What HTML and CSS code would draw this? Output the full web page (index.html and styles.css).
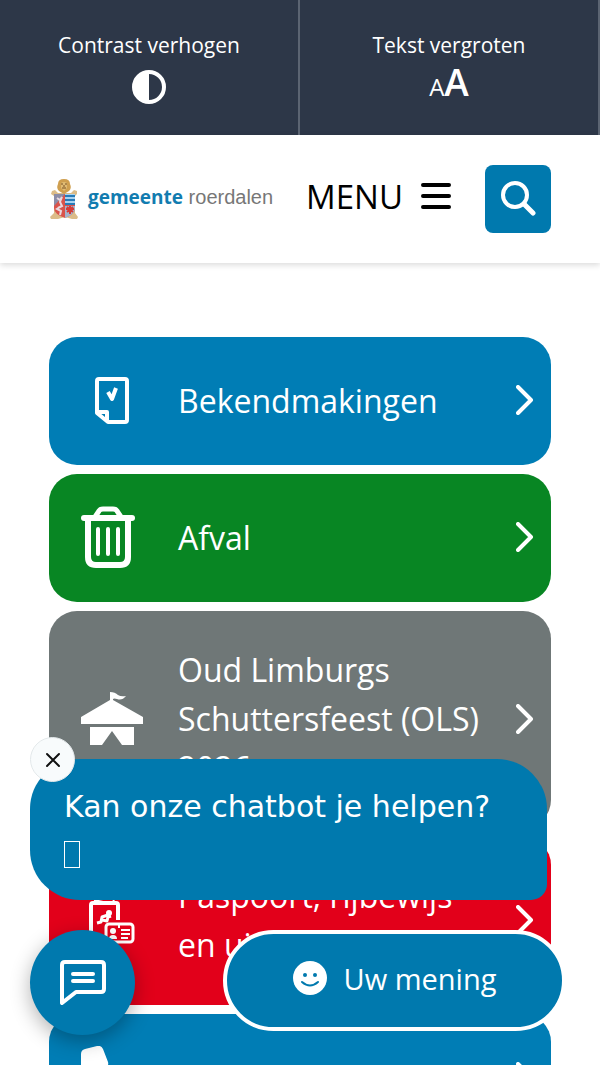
FILE: index.html
```html
<!DOCTYPE html>
<html lang="nl">
<head>
	<meta charset="UTF-8">
	<meta name="viewport" content="width=device-width, initial-scale=1">
	<title>Gemeente Roerdalen</title>
	<link rel="stylesheet" href="styles.css">
</head>
<body>
	<div class="tools">
		<button class="tool" type="button">
			<span>Contrast verhogen</span>
			<svg width="34" height="34" viewBox="0 0 34 34"><circle cx="17" cy="17" r="15" fill="none" stroke="#fff" stroke-width="4"/><path d="M17 2a15 15 0 0 0 0 30z" fill="#fff"/></svg>
		</button>
		<button class="tool" type="button">
			<span>Tekst vergroten</span>
			<span class="letters"><small>A</small><b>A</b></span>
		</button>
	</div>

	<header class="header">
		<a class="logo" href="#">
			<svg width="30" height="42" viewBox="0 0 30 42">
				<path d="M3 13l3-1 3 3h13l3-3 3 1v3l-2 2v17l3 4-1 2h-5l-7-2-7 2H2l-1-2 4-4V18l-3-2z" fill="#dcbc88"/>
				<path d="M9 6q0-5 6-5t6 5q2 4-1 7l-5 3-5-3q-3-3-1-7z" fill="#cf9f4f"/>
				<path d="M12 5q3-2 6 0v5l-3 3-3-3z" fill="#e0bb74"/>
				<path d="M12 6h2M16 6h2M13 10h4M15 7v2" stroke="#7a5223"/>
				<path d="M5 16h21v14q0 6-10 10Q5 36 5 30z" fill="#d9534b"/>
				<path d="M5 16h11L5 28z" fill="#8c8da8"/>
				<path d="M16 16h10v11H16z" fill="#a9d2ef"/>
				<path d="M16 18h10M16 22h10M16 26h10" stroke="#287bb8" stroke-width="2"/>
				<path d="M16 28h10v3q-1 6-10 9z" fill="#a5b4cc"/>
				<path d="M21 28v8M17 31h8M18 29l6 5M24 29l-6 5" stroke="#d63b37" stroke-width="2"/>
				<path d="M8 20l3 2 2-3-2 5 2 4-4 2M11 29l-3 2 4 2-1 4" stroke="#e9d9df" stroke-width="2" fill="none"/>
			</svg>
			<span class="name"><b>gemeente</b> <span>roerdalen</span></span>
		</a>
		<button class="menu" type="button">
			<span>MENU</span>
			<svg width="30" height="28" viewBox="0 0 30 28"><path d="M2 3h26M2 14h26M2 25h26" stroke="#000" stroke-width="4" stroke-linecap="round"/></svg>
		</button>
		<button class="search" type="button" aria-label="Zoeken">
			<svg width="36" height="36" viewBox="0 0 36 36"><circle cx="15" cy="14" r="12" fill="none" stroke="#fff" stroke-width="4"/><path d="M24 23l9 9" stroke="#fff" stroke-width="5" stroke-linecap="round"/></svg>
		</button>
	</header>

	<main class="tiles">
		<a class="tile blue" href="#">
			<span class="icon">
				<svg width="34" height="47" viewBox="0 0 34 47" fill="none" stroke="#fff" stroke-width="4" stroke-linejoin="round"><path d="M4 2h26q2 0 2 2v39q0 2-2 2H13L2 36V4q0-2 2-2z"/><path d="M3 35h9v9"/><path d="M13 15l4 7 4-11"/></svg>
			</span>
			<span class="label">Bekendmakingen</span>
			<svg class="arrow" viewBox="0 0 18 30"><path d="M2 2l13 13L2 28"/></svg>
		</a>
		<a class="tile green" href="#">
			<span class="icon">
				<svg width="62" height="62" viewBox="0 0 62 62" fill="none" stroke="#fff" stroke-linecap="round"><path d="M3 12h48" stroke-width="6"/><path d="M14 11l4-6q1-2 4-2h10q3 0 4 2l4 6" stroke-width="5"/><path d="M7 13v38q0 8 8 8h24q8 0 8-8V13" stroke-width="6"/><path d="M17 23v25M27 23v25M37 23v25" stroke-width="4"/></svg>
			</span>
			<span class="label">Afval</span>
			<svg class="arrow" viewBox="0 0 18 30"><path d="M2 2l13 13L2 28"/></svg>
		</a>
		<a class="tile grey" href="#">
			<span class="icon">
				<svg width="62" height="53" viewBox="0 0 62 53" fill="#fff"><path d="M29 0q5 0 8 3 3 2 8 1-4 5-9 3-3-1-4 0v1l30 17v7H0v-7L29 8z"/><path d="M9 35h44v18H41L31 39 21 53H9z"/></svg>
			</span>
			<span class="label">Oud Limburgs Schuttersfeest (OLS) 2026</span>
			<svg class="arrow" viewBox="0 0 18 30"><path d="M2 2l13 13L2 28"/></svg>
		</a>
		<a class="tile red" href="#">
			<span class="icon">
				<svg width="46" height="48" viewBox="0 0 46 48" fill="none" stroke="#fff" stroke-width="4" stroke-linejoin="round"><path d="M14 42H2V9q0-2 2-2h23q2 0 2 2v15"/><path d="M5 5l18-4 2 4" stroke-width="2"/><path d="M8 27l4-1 1-5 6-2M13 24l5 1 1-4 3-1" stroke-width="3"/><circle cx="20" cy="17" r="3" fill="#fff" stroke="none"/><rect x="17" y="28" width="27" height="18" rx="3" stroke-width="3"/><circle cx="24" cy="35" r="3" fill="#fff" stroke="none"/><path d="M20 43q0-4 4-4t4 4z" fill="#fff" stroke="none"/><path d="M32 34h9M32 38h9M32 42h7M30 29v3" stroke-width="2"/></svg>
			</span>
			<span class="label">Paspoort, rijbewijs en uittreksels</span>
			<svg class="arrow" viewBox="0 0 18 30"><path d="M2 2l13 13L2 28"/></svg>
		</a>
		<a class="tile blue" href="#">
			<span class="icon">
				<svg width="62" height="62" viewBox="0 0 62 62" fill="#fff"><path d="M4 3l12-3q4-1 6 3l5 13q1 4-2 6l-6 5q5 11 16 16l5-6q2-3 6-2l13 5q4 2 3 6l-3 12q-1 4-5 4Q26 62 12 47T0 8q0-4 4-5z"/></svg>
			</span>
			<span class="label">Contact</span>
			<svg class="arrow" viewBox="0 0 18 30"><path d="M2 2l13 13L2 28"/></svg>
		</a>
	</main>

	<div class="bubble">
		<button class="close" type="button" aria-label="Sluiten">
			<svg width="16" height="16" viewBox="0 0 16 16"><path d="M2 2l12 12M14 2L2 14" stroke="#111" stroke-width="2" stroke-linecap="round"/></svg>
		</button>
		<p>Kan onze chatbot je helpen? <span class="glyph"></span></p>
	</div>

	<button class="chat" type="button" aria-label="Chat openen">
		<svg width="46" height="46" viewBox="0 0 46 46" fill="none" stroke="#fff" stroke-width="4" stroke-linejoin="round" stroke-linecap="round"><path d="M5 2h36q3 0 3 3v24q0 3-3 3H16L2 43V5q0-3 3-3z"/><path d="M13 14h20M13 21h20"/></svg>
	</button>

	<button class="opinion" type="button">
		<svg width="34" height="34" viewBox="0 0 34 34"><circle cx="17" cy="17" r="17" fill="#fff"/><circle cx="12" cy="14" r="2" fill="#0079ae"/><circle cx="22" cy="14" r="2" fill="#0079ae"/><path d="M9 21q8 7 16 0" fill="none" stroke="#0079ae" stroke-width="2" stroke-linecap="round"/></svg>
		<span>Uw mening</span>
	</button>
</body>
</html>
```
FILE: styles.css
```css
*{
	margin: 0;
	padding: 0;
	box-sizing: border-box;
}
body{
	font-family: "Open Sans", "Noto Sans", sans-serif;
	background-color: #fff;
	overflow-x: hidden;
}
button{
	font: inherit;
	border: 0;
	background: none;
	cursor: pointer;
}
a{
	text-decoration: none;
}
svg{
	display: block;
	flex: none;
}

/* toolbar */
.tools{
	display: flex;
	background-color: #2d3748;
}
.tool{
	flex: 1;
	height: 135px;
	padding-top: 30px;
	display: flex;
	flex-direction: column;
	align-items: center;
	gap: 10px;
	color: #fff;
	font-size: 21px;
	line-height: 30px;
	border-right: 2px solid #5b6472;
}
.letters{
	display: flex;
	align-items: baseline;
	line-height: 24px;
}
.letters small{
	font-size: 24px;
	font-weight: 500;
}
.letters b{
	font-size: 37px;
	font-weight: 600;
}

/* header */
.header{
	height: 128px;
	padding: 0 49px;
	display: flex;
	align-items: center;
	background-color: #fff;
	box-shadow: 0 2px 6px rgba(0,0,0,.15);
}
.logo{
	display: flex;
	align-items: center;
	gap: 9px;
	color: #777;
}
.name{
	padding-bottom: 4px;
	white-space: nowrap;
	font-family: "Liberation Sans", Arial, sans-serif;
	font-size: 20px;
}
.name b{
	font-family: "Open Sans", sans-serif;
	font-size: 19px;
	font-weight: 700;
	color: #127cb0;
}
.menu{
	margin-left: auto;
	margin-right: 34px;
	padding-bottom: 6px;
	display: flex;
	align-items: center;
	gap: 18px;
	font-size: 33px;
	color: #000;
}
.search{
	width: 66px;
	height: 68px;
	display: flex;
	align-items: center;
	justify-content: center;
	border-radius: 8px;
	background-color: #0079ae;
}

/* tiles */
.tiles{
	padding: 74px 49px;
	display: flex;
	flex-direction: column;
	gap: 9px;
}
.tile{
	min-height: 128px;
	padding: 34px 17px 36px 32px;
	display: flex;
	align-items: center;
	border-radius: 28px;
	color: #fff;
	font-size: 32px;
	line-height: 49px;
}
.blue{
	background-color: #007db5;
}
.green{
	background-color: #088623;
}
.grey{
	background-color: #6f7777;
}
.red{
	background-color: #e2001a;
}
.icon{
	width: 62px;
	height: 49px;
	flex: none;
	display: flex;
	align-items: center;
	justify-content: center;
}
.label{
	flex: 1;
	margin-left: 35px;
	margin-right: 24px;
}
.arrow{
	width: 18px;
	height: 30px;
	fill: none;
	stroke: #fff;
	stroke-width: 4;
	stroke-linecap: round;
	stroke-linejoin: round;
}

/* chatbot */
.bubble{
	position: fixed;
	left: 30px;
	right: 53px;
	bottom: 165px;
	padding: 24px 34px 21px;
	border-radius: 50px 50px 16px 50px;
	background-color: #0079ae;
	color: #fff;
	font-family: "DejaVu Sans", sans-serif;
	font-size: 30px;
	line-height: 48px;
}
.glyph{
	display: inline-block;
	width: 16px;
	height: 27px;
	margin-right: 16px;
	vertical-align: -3px;
	border: 1px solid #fff;
}
.close{
	position: absolute;
	left: 0;
	top: -22px;
	width: 45px;
	height: 45px;
	display: flex;
	align-items: center;
	justify-content: center;
	border: 1px solid #e3e8ea;
	border-radius: 50%;
	background-color: #f8fbfc;
}
.chat{
	position: fixed;
	left: 30px;
	bottom: 30px;
	width: 105px;
	height: 105px;
	display: flex;
	align-items: center;
	justify-content: center;
	border-radius: 50%;
	background-color: #0079ae;
	box-shadow: 0 6px 20px rgba(0,0,0,.3);
}
.opinion{
	position: fixed;
	right: 34px;
	bottom: 34px;
	width: 343px;
	height: 101px;
	padding-bottom: 5px;
	display: flex;
	align-items: center;
	justify-content: center;
	gap: 17px;
	border: 4px solid #fff;
	border-radius: 51px;
	background-color: #0079ae;
	color: #fff;
	font-size: 29px;
}
```
